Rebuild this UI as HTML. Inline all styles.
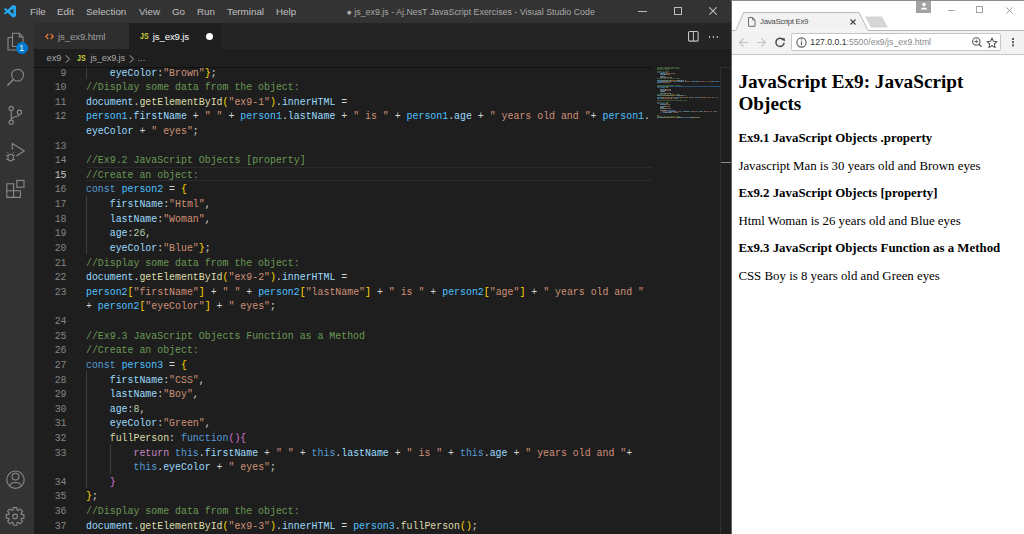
<!DOCTYPE html>
<html><head><meta charset="utf-8">
<style>
*{box-sizing:border-box;margin:0;padding:0}
html,body{width:1024px;height:534px;overflow:hidden;background:#1e1e1e;font-family:"Liberation Sans",sans-serif}
.a{position:absolute}
#vs{position:absolute;left:0;top:0;width:731px;height:534px;background:#1e1e1e;overflow:hidden}
#title{position:absolute;left:0;top:0;width:731px;height:23px;background:#333333}
.menu{position:absolute;top:6px;font-size:9.8px;color:#c0c0c0;white-space:nowrap}
#act{position:absolute;left:0;top:23px;width:34px;height:511px;background:#333333}
#tabs{position:absolute;left:34px;top:23px;width:697px;height:26px;background:#252526}
.tab{position:absolute;top:0;height:26px}
.tt{position:absolute;top:7px;font-size:9.7px;white-space:nowrap}
#bc{position:absolute;left:34px;top:49px;width:697px;height:17px;background:#1e1e1e}
.ln{position:absolute;left:34px;width:32.5px;text-align:right;font-family:"Liberation Mono",monospace;font-size:11px;line-height:14.62px;color:#858585;white-space:pre;transform:scaleX(0.8991);transform-origin:100% 0}
.ln.act{color:#c6c6c6}
.cl{position:absolute;left:85.8px;font-family:"Liberation Mono",monospace;font-size:11px;line-height:14.62px;white-space:pre;color:#d4d4d4;transform:scaleX(0.8991);transform-origin:0 0}
.ig{position:absolute;width:1px;background:#404040}
.mm{position:absolute;height:1.1px;opacity:0.42}
#br{position:absolute;left:731px;top:0;width:293px;height:534px;background:#ffffff;overflow:hidden}
.serif{font-family:"Liberation Serif",serif;color:#000}
</style></head><body>
<div id="vs">
  <!-- editor current line -->
  <div class="a" style="left:85.5px;top:167px;width:566.5px;height:14.2px;border-top:1px solid #2a2a2a;border-bottom:1px solid #2a2a2a"></div>
<div class="ln" style="top:65.50px">9</div>
<div class="cl" style="top:65.50px"><span style="color:#d4d4d4">    </span><span style="color:#9cdcfe">eyeColor</span><span style="color:#d4d4d4">:</span><span style="color:#ce9178">&quot;Brown&quot;</span><span style="color:#ffd700">}</span><span style="color:#d4d4d4">;</span></div>
<div class="ln" style="top:80.12px">10</div>
<div class="cl" style="top:80.12px"><span style="color:#6a9955">//Display some data from the object:</span></div>
<div class="ln" style="top:94.74px">11</div>
<div class="cl" style="top:94.74px"><span style="color:#9cdcfe">document</span><span style="color:#d4d4d4">.</span><span style="color:#dcdcaa">getElementById</span><span style="color:#ffd700">(</span><span style="color:#ce9178">&quot;ex9-1&quot;</span><span style="color:#ffd700">)</span><span style="color:#d4d4d4">.</span><span style="color:#9cdcfe">innerHTML</span><span style="color:#d4d4d4"> =</span></div>
<div class="ln" style="top:109.36px">12</div>
<div class="cl" style="top:109.36px"><span style="color:#4fc1ff">person1</span><span style="color:#d4d4d4">.</span><span style="color:#9cdcfe">firstName</span><span style="color:#d4d4d4"> + </span><span style="color:#ce9178">&quot; &quot;</span><span style="color:#d4d4d4"> + </span><span style="color:#4fc1ff">person1</span><span style="color:#d4d4d4">.</span><span style="color:#9cdcfe">lastName</span><span style="color:#d4d4d4"> + </span><span style="color:#ce9178">&quot; is &quot;</span><span style="color:#d4d4d4"> + </span><span style="color:#4fc1ff">person1</span><span style="color:#d4d4d4">.</span><span style="color:#9cdcfe">age</span><span style="color:#d4d4d4"> + </span><span style="color:#ce9178">&quot; years old and &quot;</span><span style="color:#d4d4d4">+ </span><span style="color:#4fc1ff">person1</span><span style="color:#d4d4d4">.</span></div>
<div class="cl" style="top:123.98px"><span style="color:#9cdcfe">eyeColor</span><span style="color:#d4d4d4"> + </span><span style="color:#ce9178">&quot; eyes&quot;</span><span style="color:#d4d4d4">;</span></div>
<div class="ln" style="top:138.60px">13</div>
<div class="cl" style="top:138.60px"></div>
<div class="ln" style="top:153.22px">14</div>
<div class="cl" style="top:153.22px"><span style="color:#6a9955">//Ex9.2 JavaScript Objects [property]</span></div>
<div class="ln act" style="top:167.84px">15</div>
<div class="cl" style="top:167.84px"><span style="color:#6a9955">//Create an object:</span></div>
<div class="ln" style="top:182.46px">16</div>
<div class="cl" style="top:182.46px"><span style="color:#569cd6">const</span><span style="color:#d4d4d4"> </span><span style="color:#4fc1ff">person2</span><span style="color:#d4d4d4"> = </span><span style="color:#ffd700">{</span></div>
<div class="ln" style="top:197.08px">17</div>
<div class="cl" style="top:197.08px"><span style="color:#d4d4d4">    </span><span style="color:#9cdcfe">firstName</span><span style="color:#d4d4d4">:</span><span style="color:#ce9178">&quot;Html&quot;</span><span style="color:#d4d4d4">,</span></div>
<div class="ln" style="top:211.70px">18</div>
<div class="cl" style="top:211.70px"><span style="color:#d4d4d4">    </span><span style="color:#9cdcfe">lastName</span><span style="color:#d4d4d4">:</span><span style="color:#ce9178">&quot;Woman&quot;</span><span style="color:#d4d4d4">,</span></div>
<div class="ln" style="top:226.32px">19</div>
<div class="cl" style="top:226.32px"><span style="color:#d4d4d4">    </span><span style="color:#9cdcfe">age</span><span style="color:#d4d4d4">:</span><span style="color:#b5cea8">26</span><span style="color:#d4d4d4">,</span></div>
<div class="ln" style="top:240.94px">20</div>
<div class="cl" style="top:240.94px"><span style="color:#d4d4d4">    </span><span style="color:#9cdcfe">eyeColor</span><span style="color:#d4d4d4">:</span><span style="color:#ce9178">&quot;Blue&quot;</span><span style="color:#ffd700">}</span><span style="color:#d4d4d4">;</span></div>
<div class="ln" style="top:255.56px">21</div>
<div class="cl" style="top:255.56px"><span style="color:#6a9955">//Display some data from the object:</span></div>
<div class="ln" style="top:270.18px">22</div>
<div class="cl" style="top:270.18px"><span style="color:#9cdcfe">document</span><span style="color:#d4d4d4">.</span><span style="color:#dcdcaa">getElementById</span><span style="color:#ffd700">(</span><span style="color:#ce9178">&quot;ex9-2&quot;</span><span style="color:#ffd700">)</span><span style="color:#d4d4d4">.</span><span style="color:#9cdcfe">innerHTML</span><span style="color:#d4d4d4"> =</span></div>
<div class="ln" style="top:284.80px">23</div>
<div class="cl" style="top:284.80px"><span style="color:#4fc1ff">person2</span><span style="color:#ffd700">[</span><span style="color:#ce9178">&quot;firstName&quot;</span><span style="color:#ffd700">]</span><span style="color:#d4d4d4"> + </span><span style="color:#ce9178">&quot; &quot;</span><span style="color:#d4d4d4"> + </span><span style="color:#4fc1ff">person2</span><span style="color:#ffd700">[</span><span style="color:#ce9178">&quot;lastName&quot;</span><span style="color:#ffd700">]</span><span style="color:#d4d4d4"> + </span><span style="color:#ce9178">&quot; is &quot;</span><span style="color:#d4d4d4"> + </span><span style="color:#4fc1ff">person2</span><span style="color:#ffd700">[</span><span style="color:#ce9178">&quot;age&quot;</span><span style="color:#ffd700">]</span><span style="color:#d4d4d4"> + </span><span style="color:#ce9178">&quot; years old and &quot;</span></div>
<div class="cl" style="top:299.42px"><span style="color:#d4d4d4">+ </span><span style="color:#4fc1ff">person2</span><span style="color:#ffd700">[</span><span style="color:#ce9178">&quot;eyeColor&quot;</span><span style="color:#ffd700">]</span><span style="color:#d4d4d4"> + </span><span style="color:#ce9178">&quot; eyes&quot;</span><span style="color:#d4d4d4">;</span></div>
<div class="ln" style="top:314.04px">24</div>
<div class="cl" style="top:314.04px"></div>
<div class="ln" style="top:328.66px">25</div>
<div class="cl" style="top:328.66px"><span style="color:#6a9955">//Ex9.3 JavaScript Objects Function as a Method</span></div>
<div class="ln" style="top:343.28px">26</div>
<div class="cl" style="top:343.28px"><span style="color:#6a9955">//Create an object:</span></div>
<div class="ln" style="top:357.90px">27</div>
<div class="cl" style="top:357.90px"><span style="color:#569cd6">const</span><span style="color:#d4d4d4"> </span><span style="color:#4fc1ff">person3</span><span style="color:#d4d4d4"> = </span><span style="color:#ffd700">{</span></div>
<div class="ln" style="top:372.52px">28</div>
<div class="cl" style="top:372.52px"><span style="color:#d4d4d4">    </span><span style="color:#9cdcfe">firstName</span><span style="color:#d4d4d4">:</span><span style="color:#ce9178">&quot;CSS&quot;</span><span style="color:#d4d4d4">,</span></div>
<div class="ln" style="top:387.14px">29</div>
<div class="cl" style="top:387.14px"><span style="color:#d4d4d4">    </span><span style="color:#9cdcfe">lastName</span><span style="color:#d4d4d4">:</span><span style="color:#ce9178">&quot;Boy&quot;</span><span style="color:#d4d4d4">,</span></div>
<div class="ln" style="top:401.76px">30</div>
<div class="cl" style="top:401.76px"><span style="color:#d4d4d4">    </span><span style="color:#9cdcfe">age</span><span style="color:#d4d4d4">:</span><span style="color:#b5cea8">8</span><span style="color:#d4d4d4">,</span></div>
<div class="ln" style="top:416.38px">31</div>
<div class="cl" style="top:416.38px"><span style="color:#d4d4d4">    </span><span style="color:#9cdcfe">eyeColor</span><span style="color:#d4d4d4">:</span><span style="color:#ce9178">&quot;Green&quot;</span><span style="color:#d4d4d4">,</span></div>
<div class="ln" style="top:431.00px">32</div>
<div class="cl" style="top:431.00px"><span style="color:#d4d4d4">    </span><span style="color:#dcdcaa">fullPerson</span><span style="color:#d4d4d4">: </span><span style="color:#569cd6">function</span><span style="color:#da70d6">(){</span></div>
<div class="ln" style="top:445.62px">33</div>
<div class="cl" style="top:445.62px"><span style="color:#d4d4d4">        </span><span style="color:#c586c0">return</span><span style="color:#d4d4d4"> </span><span style="color:#569cd6">this</span><span style="color:#d4d4d4">.</span><span style="color:#9cdcfe">firstName</span><span style="color:#d4d4d4"> + </span><span style="color:#ce9178">&quot; &quot;</span><span style="color:#d4d4d4"> + </span><span style="color:#569cd6">this</span><span style="color:#d4d4d4">.</span><span style="color:#9cdcfe">lastName</span><span style="color:#d4d4d4"> + </span><span style="color:#ce9178">&quot; is &quot;</span><span style="color:#d4d4d4"> + </span><span style="color:#569cd6">this</span><span style="color:#d4d4d4">.</span><span style="color:#9cdcfe">age</span><span style="color:#d4d4d4"> + </span><span style="color:#ce9178">&quot; years old and &quot;</span><span style="color:#d4d4d4">+</span></div>
<div class="cl" style="top:460.24px"><span style="color:#d4d4d4">        </span><span style="color:#569cd6">this</span><span style="color:#d4d4d4">.</span><span style="color:#9cdcfe">eyeColor</span><span style="color:#d4d4d4"> + </span><span style="color:#ce9178">&quot; eyes&quot;</span><span style="color:#d4d4d4">;</span></div>
<div class="ln" style="top:474.86px">34</div>
<div class="cl" style="top:474.86px"><span style="color:#d4d4d4">    </span><span style="color:#da70d6">}</span></div>
<div class="ln" style="top:489.48px">35</div>
<div class="cl" style="top:489.48px"><span style="color:#ffd700">}</span><span style="color:#d4d4d4">;</span></div>
<div class="ln" style="top:504.10px">36</div>
<div class="cl" style="top:504.10px"><span style="color:#6a9955">//Display some data from the object:</span></div>
<div class="ln" style="top:518.72px">37</div>
<div class="cl" style="top:518.72px"><span style="color:#9cdcfe">document</span><span style="color:#d4d4d4">.</span><span style="color:#dcdcaa">getElementById</span><span style="color:#ffd700">(</span><span style="color:#ce9178">&quot;ex9-3&quot;</span><span style="color:#ffd700">)</span><span style="color:#d4d4d4">.</span><span style="color:#9cdcfe">innerHTML</span><span style="color:#d4d4d4"> = </span><span style="color:#4fc1ff">person3</span><span style="color:#d4d4d4">.</span><span style="color:#dcdcaa">fullPerson</span><span style="color:#ffd700">()</span><span style="color:#d4d4d4">;</span></div>
<div class="ig" style="left:85.8px;top:64.30px;height:14.62px"></div>
<div class="ig" style="left:85.8px;top:195.88px;height:58.48px"></div>
<div class="ig" style="left:85.8px;top:371.32px;height:116.96px"></div>
<div class="ig" style="left:109.5px;top:444.42px;height:29.24px"></div>
<div class="a" style="left:657px;top:85.90px;width:64px;height:1.5px;background:#264f78"></div>
<div class="mm" style="left:657.10px;top:66.60px;width:5.80px;background:#6a9955"></div>
<div class="mm" style="left:663.55px;top:66.60px;width:6.45px;background:#6a9955"></div>
<div class="mm" style="left:670.64px;top:66.60px;width:5.80px;background:#6a9955"></div>
<div class="mm" style="left:677.10px;top:66.60px;width:1.94px;background:#6a9955"></div>
<div class="mm" style="left:657.10px;top:67.90px;width:4.52px;background:#6a9955"></div>
<div class="mm" style="left:662.26px;top:67.90px;width:6.45px;background:#6a9955"></div>
<div class="mm" style="left:669.36px;top:67.90px;width:4.52px;background:#6a9955"></div>
<div class="mm" style="left:674.51px;top:67.90px;width:5.80px;background:#6a9955"></div>
<div class="mm" style="left:657.10px;top:69.20px;width:5.16px;background:#6a9955"></div>
<div class="mm" style="left:662.90px;top:69.20px;width:1.29px;background:#6a9955"></div>
<div class="mm" style="left:664.84px;top:69.20px;width:4.52px;background:#6a9955"></div>
<div class="mm" style="left:657.10px;top:70.50px;width:5.16px;background:#6a9955"></div>
<div class="mm" style="left:662.90px;top:70.50px;width:1.29px;background:#6a9955"></div>
<div class="mm" style="left:664.84px;top:70.50px;width:3.87px;background:#6a9955"></div>
<div class="mm" style="left:657.10px;top:71.80px;width:3.23px;background:#569cd6"></div>
<div class="mm" style="left:660.97px;top:71.80px;width:4.52px;background:#4fc1ff"></div>
<div class="mm" style="left:666.13px;top:71.80px;width:0.65px;background:#d4d4d4"></div>
<div class="mm" style="left:667.42px;top:71.80px;width:0.65px;background:#ffd700"></div>
<div class="mm" style="left:659.68px;top:73.10px;width:5.80px;background:#9cdcfe"></div>
<div class="mm" style="left:665.49px;top:73.10px;width:0.65px;background:#d4d4d4"></div>
<div class="mm" style="left:666.13px;top:73.10px;width:7.74px;background:#ce9178"></div>
<div class="mm" style="left:673.87px;top:73.10px;width:0.65px;background:#d4d4d4"></div>
<div class="mm" style="left:659.68px;top:74.40px;width:5.16px;background:#9cdcfe"></div>
<div class="mm" style="left:664.84px;top:74.40px;width:0.65px;background:#d4d4d4"></div>
<div class="mm" style="left:665.49px;top:74.40px;width:3.23px;background:#ce9178"></div>
<div class="mm" style="left:668.71px;top:74.40px;width:0.65px;background:#d4d4d4"></div>
<div class="mm" style="left:659.68px;top:75.70px;width:1.94px;background:#9cdcfe"></div>
<div class="mm" style="left:661.62px;top:75.70px;width:0.65px;background:#d4d4d4"></div>
<div class="mm" style="left:662.26px;top:75.70px;width:1.29px;background:#b5cea8"></div>
<div class="mm" style="left:663.55px;top:75.70px;width:0.65px;background:#d4d4d4"></div>
<div class="mm" style="left:659.68px;top:77.00px;width:5.16px;background:#9cdcfe"></div>
<div class="mm" style="left:664.84px;top:77.00px;width:0.65px;background:#d4d4d4"></div>
<div class="mm" style="left:665.49px;top:77.00px;width:4.52px;background:#ce9178"></div>
<div class="mm" style="left:670.00px;top:77.00px;width:0.65px;background:#ffd700"></div>
<div class="mm" style="left:670.64px;top:77.00px;width:0.65px;background:#d4d4d4"></div>
<div class="mm" style="left:657.10px;top:78.30px;width:5.80px;background:#6a9955"></div>
<div class="mm" style="left:663.55px;top:78.30px;width:2.58px;background:#6a9955"></div>
<div class="mm" style="left:666.77px;top:78.30px;width:2.58px;background:#6a9955"></div>
<div class="mm" style="left:670.00px;top:78.30px;width:2.58px;background:#6a9955"></div>
<div class="mm" style="left:673.23px;top:78.30px;width:1.94px;background:#6a9955"></div>
<div class="mm" style="left:675.81px;top:78.30px;width:4.52px;background:#6a9955"></div>
<div class="mm" style="left:657.10px;top:79.60px;width:5.16px;background:#9cdcfe"></div>
<div class="mm" style="left:662.26px;top:79.60px;width:0.65px;background:#d4d4d4"></div>
<div class="mm" style="left:662.90px;top:79.60px;width:9.03px;background:#dcdcaa"></div>
<div class="mm" style="left:671.94px;top:79.60px;width:0.65px;background:#ffd700"></div>
<div class="mm" style="left:672.58px;top:79.60px;width:4.52px;background:#ce9178"></div>
<div class="mm" style="left:677.10px;top:79.60px;width:0.65px;background:#ffd700"></div>
<div class="mm" style="left:677.74px;top:79.60px;width:0.65px;background:#d4d4d4"></div>
<div class="mm" style="left:678.38px;top:79.60px;width:5.80px;background:#9cdcfe"></div>
<div class="mm" style="left:684.84px;top:79.60px;width:0.65px;background:#d4d4d4"></div>
<div class="mm" style="left:657.10px;top:80.90px;width:4.52px;background:#4fc1ff"></div>
<div class="mm" style="left:661.62px;top:80.90px;width:0.65px;background:#d4d4d4"></div>
<div class="mm" style="left:662.26px;top:80.90px;width:5.80px;background:#9cdcfe"></div>
<div class="mm" style="left:668.71px;top:80.90px;width:0.65px;background:#d4d4d4"></div>
<div class="mm" style="left:670.00px;top:80.90px;width:0.65px;background:#ce9178"></div>
<div class="mm" style="left:671.29px;top:80.90px;width:0.65px;background:#ce9178"></div>
<div class="mm" style="left:672.58px;top:80.90px;width:0.65px;background:#d4d4d4"></div>
<div class="mm" style="left:673.87px;top:80.90px;width:4.52px;background:#4fc1ff"></div>
<div class="mm" style="left:678.38px;top:80.90px;width:0.65px;background:#d4d4d4"></div>
<div class="mm" style="left:679.03px;top:80.90px;width:5.16px;background:#9cdcfe"></div>
<div class="mm" style="left:684.84px;top:80.90px;width:0.65px;background:#d4d4d4"></div>
<div class="mm" style="left:686.12px;top:80.90px;width:0.65px;background:#ce9178"></div>
<div class="mm" style="left:687.42px;top:80.90px;width:1.29px;background:#ce9178"></div>
<div class="mm" style="left:689.35px;top:80.90px;width:0.65px;background:#ce9178"></div>
<div class="mm" style="left:690.64px;top:80.90px;width:0.65px;background:#d4d4d4"></div>
<div class="mm" style="left:691.93px;top:80.90px;width:4.52px;background:#4fc1ff"></div>
<div class="mm" style="left:696.45px;top:80.90px;width:0.65px;background:#d4d4d4"></div>
<div class="mm" style="left:697.09px;top:80.90px;width:1.94px;background:#9cdcfe"></div>
<div class="mm" style="left:699.67px;top:80.90px;width:0.65px;background:#d4d4d4"></div>
<div class="mm" style="left:700.96px;top:80.90px;width:0.65px;background:#ce9178"></div>
<div class="mm" style="left:702.25px;top:80.90px;width:3.23px;background:#ce9178"></div>
<div class="mm" style="left:706.12px;top:80.90px;width:1.94px;background:#ce9178"></div>
<div class="mm" style="left:708.70px;top:80.90px;width:1.94px;background:#ce9178"></div>
<div class="mm" style="left:711.28px;top:80.90px;width:0.65px;background:#ce9178"></div>
<div class="mm" style="left:711.93px;top:80.90px;width:0.65px;background:#d4d4d4"></div>
<div class="mm" style="left:713.22px;top:80.90px;width:4.52px;background:#4fc1ff"></div>
<div class="mm" style="left:717.73px;top:80.90px;width:0.65px;background:#d4d4d4"></div>
<div class="mm" style="left:657.10px;top:82.20px;width:5.16px;background:#9cdcfe"></div>
<div class="mm" style="left:662.90px;top:82.20px;width:0.65px;background:#d4d4d4"></div>
<div class="mm" style="left:664.20px;top:82.20px;width:0.65px;background:#ce9178"></div>
<div class="mm" style="left:665.49px;top:82.20px;width:3.23px;background:#ce9178"></div>
<div class="mm" style="left:668.71px;top:82.20px;width:0.65px;background:#d4d4d4"></div>
<div class="mm" style="left:657.10px;top:84.80px;width:4.52px;background:#6a9955"></div>
<div class="mm" style="left:662.26px;top:84.80px;width:6.45px;background:#6a9955"></div>
<div class="mm" style="left:669.36px;top:84.80px;width:4.52px;background:#6a9955"></div>
<div class="mm" style="left:674.51px;top:84.80px;width:6.45px;background:#6a9955"></div>
<div class="mm" style="left:657.10px;top:86.10px;width:5.16px;background:#6a9955"></div>
<div class="mm" style="left:662.90px;top:86.10px;width:1.29px;background:#6a9955"></div>
<div class="mm" style="left:664.84px;top:86.10px;width:4.52px;background:#6a9955"></div>
<div class="mm" style="left:657.10px;top:87.40px;width:3.23px;background:#569cd6"></div>
<div class="mm" style="left:660.97px;top:87.40px;width:4.52px;background:#4fc1ff"></div>
<div class="mm" style="left:666.13px;top:87.40px;width:0.65px;background:#d4d4d4"></div>
<div class="mm" style="left:667.42px;top:87.40px;width:0.65px;background:#ffd700"></div>
<div class="mm" style="left:659.68px;top:88.70px;width:5.80px;background:#9cdcfe"></div>
<div class="mm" style="left:665.49px;top:88.70px;width:0.65px;background:#d4d4d4"></div>
<div class="mm" style="left:666.13px;top:88.70px;width:3.87px;background:#ce9178"></div>
<div class="mm" style="left:670.00px;top:88.70px;width:0.65px;background:#d4d4d4"></div>
<div class="mm" style="left:659.68px;top:90.00px;width:5.16px;background:#9cdcfe"></div>
<div class="mm" style="left:664.84px;top:90.00px;width:0.65px;background:#d4d4d4"></div>
<div class="mm" style="left:665.49px;top:90.00px;width:4.52px;background:#ce9178"></div>
<div class="mm" style="left:670.00px;top:90.00px;width:0.65px;background:#d4d4d4"></div>
<div class="mm" style="left:659.68px;top:91.30px;width:1.94px;background:#9cdcfe"></div>
<div class="mm" style="left:661.62px;top:91.30px;width:0.65px;background:#d4d4d4"></div>
<div class="mm" style="left:662.26px;top:91.30px;width:1.29px;background:#b5cea8"></div>
<div class="mm" style="left:663.55px;top:91.30px;width:0.65px;background:#d4d4d4"></div>
<div class="mm" style="left:659.68px;top:92.60px;width:5.16px;background:#9cdcfe"></div>
<div class="mm" style="left:664.84px;top:92.60px;width:0.65px;background:#d4d4d4"></div>
<div class="mm" style="left:665.49px;top:92.60px;width:3.87px;background:#ce9178"></div>
<div class="mm" style="left:669.36px;top:92.60px;width:0.65px;background:#ffd700"></div>
<div class="mm" style="left:670.00px;top:92.60px;width:0.65px;background:#d4d4d4"></div>
<div class="mm" style="left:657.10px;top:93.90px;width:5.80px;background:#6a9955"></div>
<div class="mm" style="left:663.55px;top:93.90px;width:2.58px;background:#6a9955"></div>
<div class="mm" style="left:666.77px;top:93.90px;width:2.58px;background:#6a9955"></div>
<div class="mm" style="left:670.00px;top:93.90px;width:2.58px;background:#6a9955"></div>
<div class="mm" style="left:673.23px;top:93.90px;width:1.94px;background:#6a9955"></div>
<div class="mm" style="left:675.81px;top:93.90px;width:4.52px;background:#6a9955"></div>
<div class="mm" style="left:657.10px;top:95.20px;width:5.16px;background:#9cdcfe"></div>
<div class="mm" style="left:662.26px;top:95.20px;width:0.65px;background:#d4d4d4"></div>
<div class="mm" style="left:662.90px;top:95.20px;width:9.03px;background:#dcdcaa"></div>
<div class="mm" style="left:671.94px;top:95.20px;width:0.65px;background:#ffd700"></div>
<div class="mm" style="left:672.58px;top:95.20px;width:4.52px;background:#ce9178"></div>
<div class="mm" style="left:677.10px;top:95.20px;width:0.65px;background:#ffd700"></div>
<div class="mm" style="left:677.74px;top:95.20px;width:0.65px;background:#d4d4d4"></div>
<div class="mm" style="left:678.38px;top:95.20px;width:5.80px;background:#9cdcfe"></div>
<div class="mm" style="left:684.84px;top:95.20px;width:0.65px;background:#d4d4d4"></div>
<div class="mm" style="left:657.10px;top:96.50px;width:4.52px;background:#4fc1ff"></div>
<div class="mm" style="left:661.62px;top:96.50px;width:0.65px;background:#ffd700"></div>
<div class="mm" style="left:662.26px;top:96.50px;width:7.10px;background:#ce9178"></div>
<div class="mm" style="left:669.36px;top:96.50px;width:0.65px;background:#ffd700"></div>
<div class="mm" style="left:670.64px;top:96.50px;width:0.65px;background:#d4d4d4"></div>
<div class="mm" style="left:671.94px;top:96.50px;width:0.65px;background:#ce9178"></div>
<div class="mm" style="left:673.23px;top:96.50px;width:0.65px;background:#ce9178"></div>
<div class="mm" style="left:674.51px;top:96.50px;width:0.65px;background:#d4d4d4"></div>
<div class="mm" style="left:675.81px;top:96.50px;width:4.52px;background:#4fc1ff"></div>
<div class="mm" style="left:680.32px;top:96.50px;width:0.65px;background:#ffd700"></div>
<div class="mm" style="left:680.97px;top:96.50px;width:6.45px;background:#ce9178"></div>
<div class="mm" style="left:687.42px;top:96.50px;width:0.65px;background:#ffd700"></div>
<div class="mm" style="left:688.71px;top:96.50px;width:0.65px;background:#d4d4d4"></div>
<div class="mm" style="left:690.00px;top:96.50px;width:0.65px;background:#ce9178"></div>
<div class="mm" style="left:691.29px;top:96.50px;width:1.29px;background:#ce9178"></div>
<div class="mm" style="left:693.22px;top:96.50px;width:0.65px;background:#ce9178"></div>
<div class="mm" style="left:694.51px;top:96.50px;width:0.65px;background:#d4d4d4"></div>
<div class="mm" style="left:695.80px;top:96.50px;width:4.52px;background:#4fc1ff"></div>
<div class="mm" style="left:700.32px;top:96.50px;width:0.65px;background:#ffd700"></div>
<div class="mm" style="left:700.96px;top:96.50px;width:3.23px;background:#ce9178"></div>
<div class="mm" style="left:704.19px;top:96.50px;width:0.65px;background:#ffd700"></div>
<div class="mm" style="left:705.48px;top:96.50px;width:0.65px;background:#d4d4d4"></div>
<div class="mm" style="left:706.76px;top:96.50px;width:0.65px;background:#ce9178"></div>
<div class="mm" style="left:708.06px;top:96.50px;width:3.23px;background:#ce9178"></div>
<div class="mm" style="left:711.93px;top:96.50px;width:1.94px;background:#ce9178"></div>
<div class="mm" style="left:714.50px;top:96.50px;width:1.94px;background:#ce9178"></div>
<div class="mm" style="left:717.09px;top:96.50px;width:0.65px;background:#ce9178"></div>
<div class="mm" style="left:657.10px;top:97.80px;width:0.65px;background:#d4d4d4"></div>
<div class="mm" style="left:658.39px;top:97.80px;width:4.52px;background:#4fc1ff"></div>
<div class="mm" style="left:662.90px;top:97.80px;width:0.65px;background:#ffd700"></div>
<div class="mm" style="left:663.55px;top:97.80px;width:6.45px;background:#ce9178"></div>
<div class="mm" style="left:670.00px;top:97.80px;width:0.65px;background:#ffd700"></div>
<div class="mm" style="left:671.29px;top:97.80px;width:0.65px;background:#d4d4d4"></div>
<div class="mm" style="left:672.58px;top:97.80px;width:0.65px;background:#ce9178"></div>
<div class="mm" style="left:673.87px;top:97.80px;width:3.23px;background:#ce9178"></div>
<div class="mm" style="left:677.10px;top:97.80px;width:0.65px;background:#d4d4d4"></div>
<div class="mm" style="left:657.10px;top:100.40px;width:4.52px;background:#6a9955"></div>
<div class="mm" style="left:662.26px;top:100.40px;width:6.45px;background:#6a9955"></div>
<div class="mm" style="left:669.36px;top:100.40px;width:4.52px;background:#6a9955"></div>
<div class="mm" style="left:674.51px;top:100.40px;width:5.16px;background:#6a9955"></div>
<div class="mm" style="left:680.32px;top:100.40px;width:1.29px;background:#6a9955"></div>
<div class="mm" style="left:682.25px;top:100.40px;width:0.65px;background:#6a9955"></div>
<div class="mm" style="left:683.55px;top:100.40px;width:3.87px;background:#6a9955"></div>
<div class="mm" style="left:657.10px;top:101.70px;width:5.16px;background:#6a9955"></div>
<div class="mm" style="left:662.90px;top:101.70px;width:1.29px;background:#6a9955"></div>
<div class="mm" style="left:664.84px;top:101.70px;width:4.52px;background:#6a9955"></div>
<div class="mm" style="left:657.10px;top:103.00px;width:3.23px;background:#569cd6"></div>
<div class="mm" style="left:660.97px;top:103.00px;width:4.52px;background:#4fc1ff"></div>
<div class="mm" style="left:666.13px;top:103.00px;width:0.65px;background:#d4d4d4"></div>
<div class="mm" style="left:667.42px;top:103.00px;width:0.65px;background:#ffd700"></div>
<div class="mm" style="left:659.68px;top:104.30px;width:5.80px;background:#9cdcfe"></div>
<div class="mm" style="left:665.49px;top:104.30px;width:0.65px;background:#d4d4d4"></div>
<div class="mm" style="left:666.13px;top:104.30px;width:3.23px;background:#ce9178"></div>
<div class="mm" style="left:669.36px;top:104.30px;width:0.65px;background:#d4d4d4"></div>
<div class="mm" style="left:659.68px;top:105.60px;width:5.16px;background:#9cdcfe"></div>
<div class="mm" style="left:664.84px;top:105.60px;width:0.65px;background:#d4d4d4"></div>
<div class="mm" style="left:665.49px;top:105.60px;width:3.23px;background:#ce9178"></div>
<div class="mm" style="left:668.71px;top:105.60px;width:0.65px;background:#d4d4d4"></div>
<div class="mm" style="left:659.68px;top:106.90px;width:1.94px;background:#9cdcfe"></div>
<div class="mm" style="left:661.62px;top:106.90px;width:0.65px;background:#d4d4d4"></div>
<div class="mm" style="left:662.26px;top:106.90px;width:0.65px;background:#b5cea8"></div>
<div class="mm" style="left:662.90px;top:106.90px;width:0.65px;background:#d4d4d4"></div>
<div class="mm" style="left:659.68px;top:108.20px;width:5.16px;background:#9cdcfe"></div>
<div class="mm" style="left:664.84px;top:108.20px;width:0.65px;background:#d4d4d4"></div>
<div class="mm" style="left:665.49px;top:108.20px;width:4.52px;background:#ce9178"></div>
<div class="mm" style="left:670.00px;top:108.20px;width:0.65px;background:#d4d4d4"></div>
<div class="mm" style="left:659.68px;top:109.50px;width:6.45px;background:#dcdcaa"></div>
<div class="mm" style="left:666.13px;top:109.50px;width:0.65px;background:#d4d4d4"></div>
<div class="mm" style="left:667.42px;top:109.50px;width:5.16px;background:#569cd6"></div>
<div class="mm" style="left:672.58px;top:109.50px;width:1.94px;background:#da70d6"></div>
<div class="mm" style="left:662.26px;top:110.80px;width:3.87px;background:#c586c0"></div>
<div class="mm" style="left:666.77px;top:110.80px;width:2.58px;background:#569cd6"></div>
<div class="mm" style="left:669.36px;top:110.80px;width:0.65px;background:#d4d4d4"></div>
<div class="mm" style="left:670.00px;top:110.80px;width:5.80px;background:#9cdcfe"></div>
<div class="mm" style="left:676.45px;top:110.80px;width:0.65px;background:#d4d4d4"></div>
<div class="mm" style="left:677.74px;top:110.80px;width:0.65px;background:#ce9178"></div>
<div class="mm" style="left:679.03px;top:110.80px;width:0.65px;background:#ce9178"></div>
<div class="mm" style="left:680.32px;top:110.80px;width:0.65px;background:#d4d4d4"></div>
<div class="mm" style="left:681.61px;top:110.80px;width:2.58px;background:#569cd6"></div>
<div class="mm" style="left:684.19px;top:110.80px;width:0.65px;background:#d4d4d4"></div>
<div class="mm" style="left:684.84px;top:110.80px;width:5.16px;background:#9cdcfe"></div>
<div class="mm" style="left:690.64px;top:110.80px;width:0.65px;background:#d4d4d4"></div>
<div class="mm" style="left:691.93px;top:110.80px;width:0.65px;background:#ce9178"></div>
<div class="mm" style="left:693.22px;top:110.80px;width:1.29px;background:#ce9178"></div>
<div class="mm" style="left:695.15px;top:110.80px;width:0.65px;background:#ce9178"></div>
<div class="mm" style="left:696.45px;top:110.80px;width:0.65px;background:#d4d4d4"></div>
<div class="mm" style="left:697.74px;top:110.80px;width:2.58px;background:#569cd6"></div>
<div class="mm" style="left:700.32px;top:110.80px;width:0.65px;background:#d4d4d4"></div>
<div class="mm" style="left:700.96px;top:110.80px;width:1.94px;background:#9cdcfe"></div>
<div class="mm" style="left:703.54px;top:110.80px;width:0.65px;background:#d4d4d4"></div>
<div class="mm" style="left:704.83px;top:110.80px;width:0.65px;background:#ce9178"></div>
<div class="mm" style="left:706.12px;top:110.80px;width:3.23px;background:#ce9178"></div>
<div class="mm" style="left:709.99px;top:110.80px;width:1.94px;background:#ce9178"></div>
<div class="mm" style="left:712.57px;top:110.80px;width:1.94px;background:#ce9178"></div>
<div class="mm" style="left:715.15px;top:110.80px;width:0.65px;background:#ce9178"></div>
<div class="mm" style="left:715.80px;top:110.80px;width:0.65px;background:#d4d4d4"></div>
<div class="mm" style="left:662.26px;top:112.10px;width:2.58px;background:#569cd6"></div>
<div class="mm" style="left:664.84px;top:112.10px;width:0.65px;background:#d4d4d4"></div>
<div class="mm" style="left:665.49px;top:112.10px;width:5.16px;background:#9cdcfe"></div>
<div class="mm" style="left:671.29px;top:112.10px;width:0.65px;background:#d4d4d4"></div>
<div class="mm" style="left:672.58px;top:112.10px;width:0.65px;background:#ce9178"></div>
<div class="mm" style="left:673.87px;top:112.10px;width:3.23px;background:#ce9178"></div>
<div class="mm" style="left:677.10px;top:112.10px;width:0.65px;background:#d4d4d4"></div>
<div class="mm" style="left:659.68px;top:113.40px;width:0.65px;background:#da70d6"></div>
<div class="mm" style="left:657.10px;top:114.70px;width:0.65px;background:#ffd700"></div>
<div class="mm" style="left:657.75px;top:114.70px;width:0.65px;background:#d4d4d4"></div>
<div class="mm" style="left:657.10px;top:116.00px;width:5.80px;background:#6a9955"></div>
<div class="mm" style="left:663.55px;top:116.00px;width:2.58px;background:#6a9955"></div>
<div class="mm" style="left:666.77px;top:116.00px;width:2.58px;background:#6a9955"></div>
<div class="mm" style="left:670.00px;top:116.00px;width:2.58px;background:#6a9955"></div>
<div class="mm" style="left:673.23px;top:116.00px;width:1.94px;background:#6a9955"></div>
<div class="mm" style="left:675.81px;top:116.00px;width:4.52px;background:#6a9955"></div>
<div class="mm" style="left:657.10px;top:117.30px;width:5.16px;background:#9cdcfe"></div>
<div class="mm" style="left:662.26px;top:117.30px;width:0.65px;background:#d4d4d4"></div>
<div class="mm" style="left:662.90px;top:117.30px;width:9.03px;background:#dcdcaa"></div>
<div class="mm" style="left:671.94px;top:117.30px;width:0.65px;background:#ffd700"></div>
<div class="mm" style="left:672.58px;top:117.30px;width:4.52px;background:#ce9178"></div>
<div class="mm" style="left:677.10px;top:117.30px;width:0.65px;background:#ffd700"></div>
<div class="mm" style="left:677.74px;top:117.30px;width:0.65px;background:#d4d4d4"></div>
<div class="mm" style="left:678.38px;top:117.30px;width:5.80px;background:#9cdcfe"></div>
<div class="mm" style="left:684.84px;top:117.30px;width:0.65px;background:#d4d4d4"></div>
<div class="mm" style="left:686.12px;top:117.30px;width:4.52px;background:#4fc1ff"></div>
<div class="mm" style="left:690.64px;top:117.30px;width:0.65px;background:#d4d4d4"></div>
<div class="mm" style="left:691.29px;top:117.30px;width:6.45px;background:#dcdcaa"></div>
<div class="mm" style="left:697.74px;top:117.30px;width:1.29px;background:#ffd700"></div>
<div class="mm" style="left:699.02px;top:117.30px;width:0.65px;background:#d4d4d4"></div>
  <!-- editor top shadow -->
  <div class="a" style="left:34px;top:66.5px;width:618px;height:1.5px;background:#111111"></div>
  <!-- minimap & scrollbar -->
  <div class="a" style="left:720px;top:66.5px;width:1px;height:468px;background:#2e2e2e"></div>
  <div class="a" style="left:720px;top:66.5px;width:11px;height:1px;background:#2e2e2e"></div>
  <div class="a" style="left:721px;top:161.8px;width:10px;height:1.4px;background:#8a8a8a"></div>

  <div id="title">
    <svg class="a" style="left:3.9px;top:5px" width="12.5" height="12.5" viewBox="0 0 100 100"><path fill="#23a7f2" fill-rule="evenodd" d="M96.46 10.8 L75.86 0.87 C73.48 -0.28 70.62 0.2 68.75 2.07 L29.3 38.05 L12.12 25.01 C10.52 23.79 8.28 23.89 6.8 25.24 L1.29 30.25 C-0.53 31.9 -0.53 34.76 1.28 36.42 L16.18 50 L1.28 63.58 C-0.53 65.24 -0.53 68.1 1.29 69.750 L6.8 74.76 C8.28 76.11 10.52 76.21 12.12 74.99 L29.3 61.95 L68.75 97.93 C70.62 99.8 73.48 100.28 75.86 99.13 L96.46 89.2 C98.62 88.16 100 85.97 100 83.57 V16.43 C100 14.03 98.62 11.84 96.46 10.8 Z M75.01 72.7 L45.1 50 L75.01 27.3 Z"/></svg>
    <div class="menu" style="left:30px">File</div>
    <div class="menu" style="left:57px">Edit</div>
    <div class="menu" style="left:86px">Selection</div>
    <div class="menu" style="left:139px">View</div>
    <div class="menu" style="left:172px">Go</div>
    <div class="menu" style="left:197px">Run</div>
    <div class="menu" style="left:227px">Terminal</div>
    <div class="menu" style="left:276px">Help</div>
    <div class="menu" style="left:346.5px;font-size:8.85px;top:7.1px;color:#a8a8a8">● js_ex9.js - Aj.NesT JavaScript Exercises - Visual Studio Code</div>
    <div class="a" style="left:638.3px;top:11px;width:8.8px;height:1px;background:#bdbdbd"></div>
    <div class="a" style="left:673.9px;top:7.3px;width:8px;height:8px;border:1px solid #bdbdbd"></div>
    <svg class="a" style="left:709px;top:7.2px" width="8" height="8" viewBox="0 0 8 8"><path d="M0.3 0.3L7.7 7.7M7.7 0.3L0.3 7.7" stroke="#bdbdbd" stroke-width="1.05"/></svg>
  </div>

  <div id="act">
  <svg class="a" style="left:0;top:-23px" width="34" height="534" viewBox="0 0 34 534">
    <g fill="none" stroke="#8a8a8a" stroke-width="1.1">
      <!-- explorer -->
      <path d="M12.5 33.2 H19.3 L23 36.9 V46.5 H12.5 Z M19.3 33.2 V36.9 H23"/>
      <path d="M12.5 37.5 H8 V50 H18 V46.5"/>
      <!-- search -->
      <circle cx="17.6" cy="75.1" r="5.9"/>
      <path d="M13.4 79.4 L7.4 85.6" stroke-width="1.5"/>
      <!-- source control -->
      <circle cx="11.2" cy="108.5" r="2.1"/>
      <circle cx="11.2" cy="122.2" r="2.1"/>
      <circle cx="19.4" cy="112.2" r="2.1"/>
      <path d="M11.2 110.6 V120.1 M19.4 114.3 C19.4 117.5 11.6 115.5 11.2 120.1"/>
      <!-- run & debug -->
      <path d="M12.3 149.5 V143.6 L24.3 151 L16.4 156"/>
      <ellipse cx="10.6" cy="157.6" rx="2.7" ry="3.3"/>
      <path d="M6.3 155.5 H8 M6.3 159.5 H8 M13.2 155.5 H14.9 M13.2 159.5 H14.9 M8.4 153.5 L7.4 152.2 M12.8 153.5 L13.8 152.2" stroke-width="1"/>
      <!-- extensions -->
      <path d="M6.8 190.8 V183.8 H13.6 V190.8 H20.4 V197.4 H6.8 Z M13.6 190.8 V197.4 M6.8 190.8 H13.6"/>
      <rect x="16.8" y="180.4" width="7.2" height="6.8"/>
      <!-- accounts -->
      <circle cx="15.5" cy="479.7" r="8.7"/>
      <circle cx="15.5" cy="476.6" r="3.4"/>
      <path d="M9.6 486.2 C10.8 481.2 20.2 481.2 21.4 486.2"/>
      <!-- gear -->
      <path d="M21.41 514.45 L23.92 514.61 L23.92 518.19 L21.41 518.35 L20.94 519.48 L22.60 521.37 L20.07 523.90 L18.18 522.24 L17.05 522.71 L16.89 525.22 L13.31 525.22 L13.15 522.71 L12.02 522.24 L10.13 523.90 L7.60 521.37 L9.26 519.48 L8.79 518.35 L6.28 518.19 L6.28 514.61 L8.79 514.45 L9.26 513.32 L7.60 511.43 L10.13 508.90 L12.02 510.56 L13.15 510.09 L13.31 507.58 L16.89 507.58 L17.05 510.09 L18.18 510.56 L20.07 508.90 L22.60 511.43 L20.94 513.32 Z" stroke-linejoin="round"/>
      <circle cx="15.1" cy="516.4" r="2.3"/>
    </g>
  </svg>
  <div class="a" style="left:15.5px;top:18.8px;width:12px;height:12px;border-radius:50%;background:#007acc;color:#fff;font-size:8.5px;text-align:center;line-height:12px">1</div>
  </div>

  <div id="tabs">
    <div class="tab" style="left:0;width:94.6px;background:#2d2d2d">
      <svg class="a" style="left:10.5px;top:10px" width="9" height="7" viewBox="0 0 9 7"><path d="M3.2 0.8L0.9 3.5L3.2 6.2M5.8 0.8L8.1 3.5L5.8 6.2" fill="none" stroke="#e37933" stroke-width="1.3"/></svg>
      <div class="tt" style="left:24.1px;top:8.1px;font-size:9.6px;letter-spacing:-0.12px;color:#9d9d9d">js_ex9.html</div>
    </div>
    <div class="tab" style="left:94.6px;width:92px;background:#1e1e1e">
      <div class="tt" style="left:11.6px;color:#cbcb41;font-weight:bold;font-size:8.6px;top:7.6px;transform:scaleX(0.82);transform-origin:0 0">JS</div>
      <div class="tt" style="left:24.2px;top:8.1px;font-size:9.6px;letter-spacing:-0.12px;color:#ffffff">js_ex9.js</div>
      <div class="a" style="left:77.7px;top:10px;width:7px;height:7px;border-radius:50%;background:#ffffff"></div>
    </div>
    <svg class="a" style="left:654.3px;top:8.3px" width="11" height="11" viewBox="0 0 11 11"><rect x="0.55" y="0.55" width="9.6" height="9.6" rx="1.3" fill="none" stroke="#c5c5c5" stroke-width="1.1"/><path d="M5.4 0.6V10.1" stroke="#c5c5c5" stroke-width="1"/></svg>
    <div class="a" style="left:674.5px;top:13.2px;width:1.7px;height:1.7px;background:#c5c5c5;box-shadow:3.9px 0 #c5c5c5,7.8px 0 #c5c5c5"></div>
  </div>

  <div id="bc">
    <div class="tt" style="left:12.5px;top:4px;font-size:9.3px;color:#a9a9a9">ex9</div>
    <svg class="a" style="left:31px;top:5.8px" width="6" height="8" viewBox="0 0 6 8"><path d="M0.5 0.2L4.6 4L0.5 7.8" fill="none" stroke="#a9a9a9" stroke-width="1"/></svg>
    <div class="tt" style="left:42.8px;top:4.2px;color:#cbcb41;font-weight:bold;font-size:8.6px;transform:scaleX(0.82);transform-origin:0 0">JS</div>
    <div class="tt" style="left:56.5px;top:4px;font-size:9.3px;letter-spacing:-0.2px;color:#a9a9a9">js_ex9.js</div>
    <svg class="a" style="left:94.5px;top:5.8px" width="6" height="8" viewBox="0 0 6 8"><path d="M0.5 0.2L4.6 4L0.5 7.8" fill="none" stroke="#a9a9a9" stroke-width="1"/></svg>
    <div class="tt" style="left:103.5px;top:4px;font-size:9.3px;color:#a9a9a9">...</div>
  </div>
</div>

<div id="br">
  <!-- tab strip -->
  <svg class="a" style="left:0;top:0" width="293" height="31" viewBox="0 0 293 31">
    <path d="M4.8 30.5 L12.6 12.5 H128 L137 30.5" fill="#f2f2f2" stroke="#b9b9b9" stroke-width="1"/>
    <path d="M134 16.5 H151 L157 27.5 H140 Z" fill="#d5d5d5"/>
    <path d="M0 30.5 H4.5 M137 30.5 H293" stroke="#b9b9b9" stroke-width="1"/>
  </svg>
  <!-- favicon -->
  <svg class="a" style="left:17px;top:17px" width="8" height="10" viewBox="0 0 8 10"><path d="M0.5 0.5 H4.6 L7 2.9 V9.3 H0.5 Z M4.6 0.5 V2.9 H7" fill="none" stroke="#6a6a6a" stroke-width="0.95"/></svg>
  <div class="a" style="left:29px;top:17px;font-size:7.9px;letter-spacing:-0.32px;color:#4a4a4a;white-space:nowrap">JavaScript Ex9</div>
  <svg class="a" style="left:119.2px;top:18.6px" width="6" height="6" viewBox="0 0 6 6"><path d="M0.5 0.5L5.5 5.5M5.5 0.5L0.5 5.5" stroke="#444" stroke-width="1.15"/></svg>
  <!-- profile & window controls -->
  <div class="a" style="left:185px;top:0;width:15px;height:13px;background:#a3a3a3"></div>
  <svg class="a" style="left:188.5px;top:2px" width="8" height="8" viewBox="0 0 8 8"><circle cx="4" cy="2.5" r="1.8" fill="#fff"/><path d="M0.8 7.5 C1 4.8 7 4.8 7.2 7.5 Z" fill="#fff"/></svg>
  <div class="a" style="left:216.5px;top:9.5px;width:7px;height:1px;background:#a8a8a8"></div>
  <div class="a" style="left:245.3px;top:6.3px;width:7px;height:7px;border:1px solid #a0a0a0"></div>
  <svg class="a" style="left:274.5px;top:6.5px" width="7" height="7" viewBox="0 0 7 7"><path d="M0.3 0.3L6.7 6.7M6.7 0.3L0.3 6.7" stroke="#a0a0a0" stroke-width="1"/></svg>
  <!-- toolbar -->
  <div class="a" style="left:0;top:31px;width:293px;height:24px;background:#f2f2f2;border-bottom:1px solid #c6c6c6"></div>
  <svg class="a" style="left:7px;top:37px" width="11" height="11" viewBox="0 0 11 11"><path d="M10 5.5H1.5M5.5 1.5L1.5 5.5L5.5 9.5" fill="none" stroke="#c2c2c2" stroke-width="1.2"/></svg>
  <svg class="a" style="left:25px;top:37px" width="11" height="11" viewBox="0 0 11 11"><path d="M1 5.5H9.5M5.5 1.5L9.5 5.5L5.5 9.5" fill="none" stroke="#c2c2c2" stroke-width="1.2"/></svg>
  <svg class="a" style="left:42.5px;top:36.3px" width="12" height="12" viewBox="0 0 12 12"><path d="M9.4 4 A4.1 4.1 0 1 0 10.1 6.8" fill="none" stroke="#4a4a4a" stroke-width="1.45"/><path d="M7.2 2.2 H10.8 V5.8 Z" fill="#4a4a4a"/></svg>
  <div class="a" style="left:60.2px;top:33.4px;width:209.8px;height:17.6px;background:#fff;border:1px solid #c6c6c6;border-radius:2px"></div>
  <svg class="a" style="left:64.5px;top:37px" width="11" height="11" viewBox="0 0 11 11"><circle cx="5.5" cy="5.5" r="4.6" fill="none" stroke="#5a5a5a" stroke-width="1.1"/><path d="M5.5 4.5V8.3" stroke="#5a5a5a" stroke-width="1.2"/><circle cx="5.5" cy="2.9" r="0.7" fill="#5a5a5a"/></svg>
  <div class="a" style="left:79.3px;top:37.3px;font-size:8.7px;white-space:nowrap;color:#333">127.0.0.1<span style="color:#8a8a8a">:5500/ex9/js_ex9.html</span></div>
  <svg class="a" style="left:240px;top:37px" width="12" height="12" viewBox="0 0 12 12"><circle cx="5.3" cy="4.5" r="3.7" fill="none" stroke="#5a5a5a" stroke-width="1.1"/><path d="M8 7.2L10.5 9.7" stroke="#5a5a5a" stroke-width="1.4"/><path d="M3.4 4.5H7.2M5.3 2.6V6.4" stroke="#5a5a5a" stroke-width="0.9"/></svg>
  <svg class="a" style="left:254.5px;top:36.5px" width="12" height="12" viewBox="0 0 12 12"><path d="M6 1 L7.4 4.3 L11 4.6 L8.3 7 L9.1 10.6 L6 8.7 L2.9 10.6 L3.7 7 L1 4.6 L4.6 4.3 Z" fill="none" stroke="#5a5a5a" stroke-width="1.1" stroke-linejoin="round"/></svg>
  <div class="a" style="left:280.5px;top:38.4px;width:2px;height:2px;background:#5a5a5a;box-shadow:0 3.2px #5a5a5a,0 6.4px #5a5a5a"></div>
  <!-- page -->
  <div class="a serif" style="left:7.4px;top:70.7px;width:285px;font-size:19.2px;font-weight:bold;line-height:22px">JavaScript Ex9: JavaScript Objects</div>
  <div class="a serif" style="left:7.4px;top:130.6px;font-size:12.86px;font-weight:bold;white-space:nowrap">Ex9.1 JavaScript Objects .property</div>
  <div class="a serif" style="left:7.4px;top:158.6px;font-size:12.86px;white-space:nowrap">Javascript Man is 30 years old and Brown eyes</div>
  <div class="a serif" style="left:7.4px;top:185.6px;font-size:12.86px;font-weight:bold;white-space:nowrap">Ex9.2 JavaScript Objects [property]</div>
  <div class="a serif" style="left:7.4px;top:213.6px;font-size:12.86px;white-space:nowrap">Html Woman is 26 years old and Blue eyes</div>
  <div class="a serif" style="left:7.4px;top:240.6px;font-size:12.86px;font-weight:bold;white-space:nowrap">Ex9.3 JavaScript Objects Function as a Method</div>
  <div class="a serif" style="left:7.4px;top:268.6px;font-size:12.86px;white-space:nowrap">CSS Boy is 8 years old and Green eyes</div>
  <div class="a" style="left:0;top:0;width:1px;height:534px;background:#66625e"></div>
  <div class="a" style="left:0;top:0;width:293px;height:1px;background:#8e8a86"></div>
</div>
</body></html>
